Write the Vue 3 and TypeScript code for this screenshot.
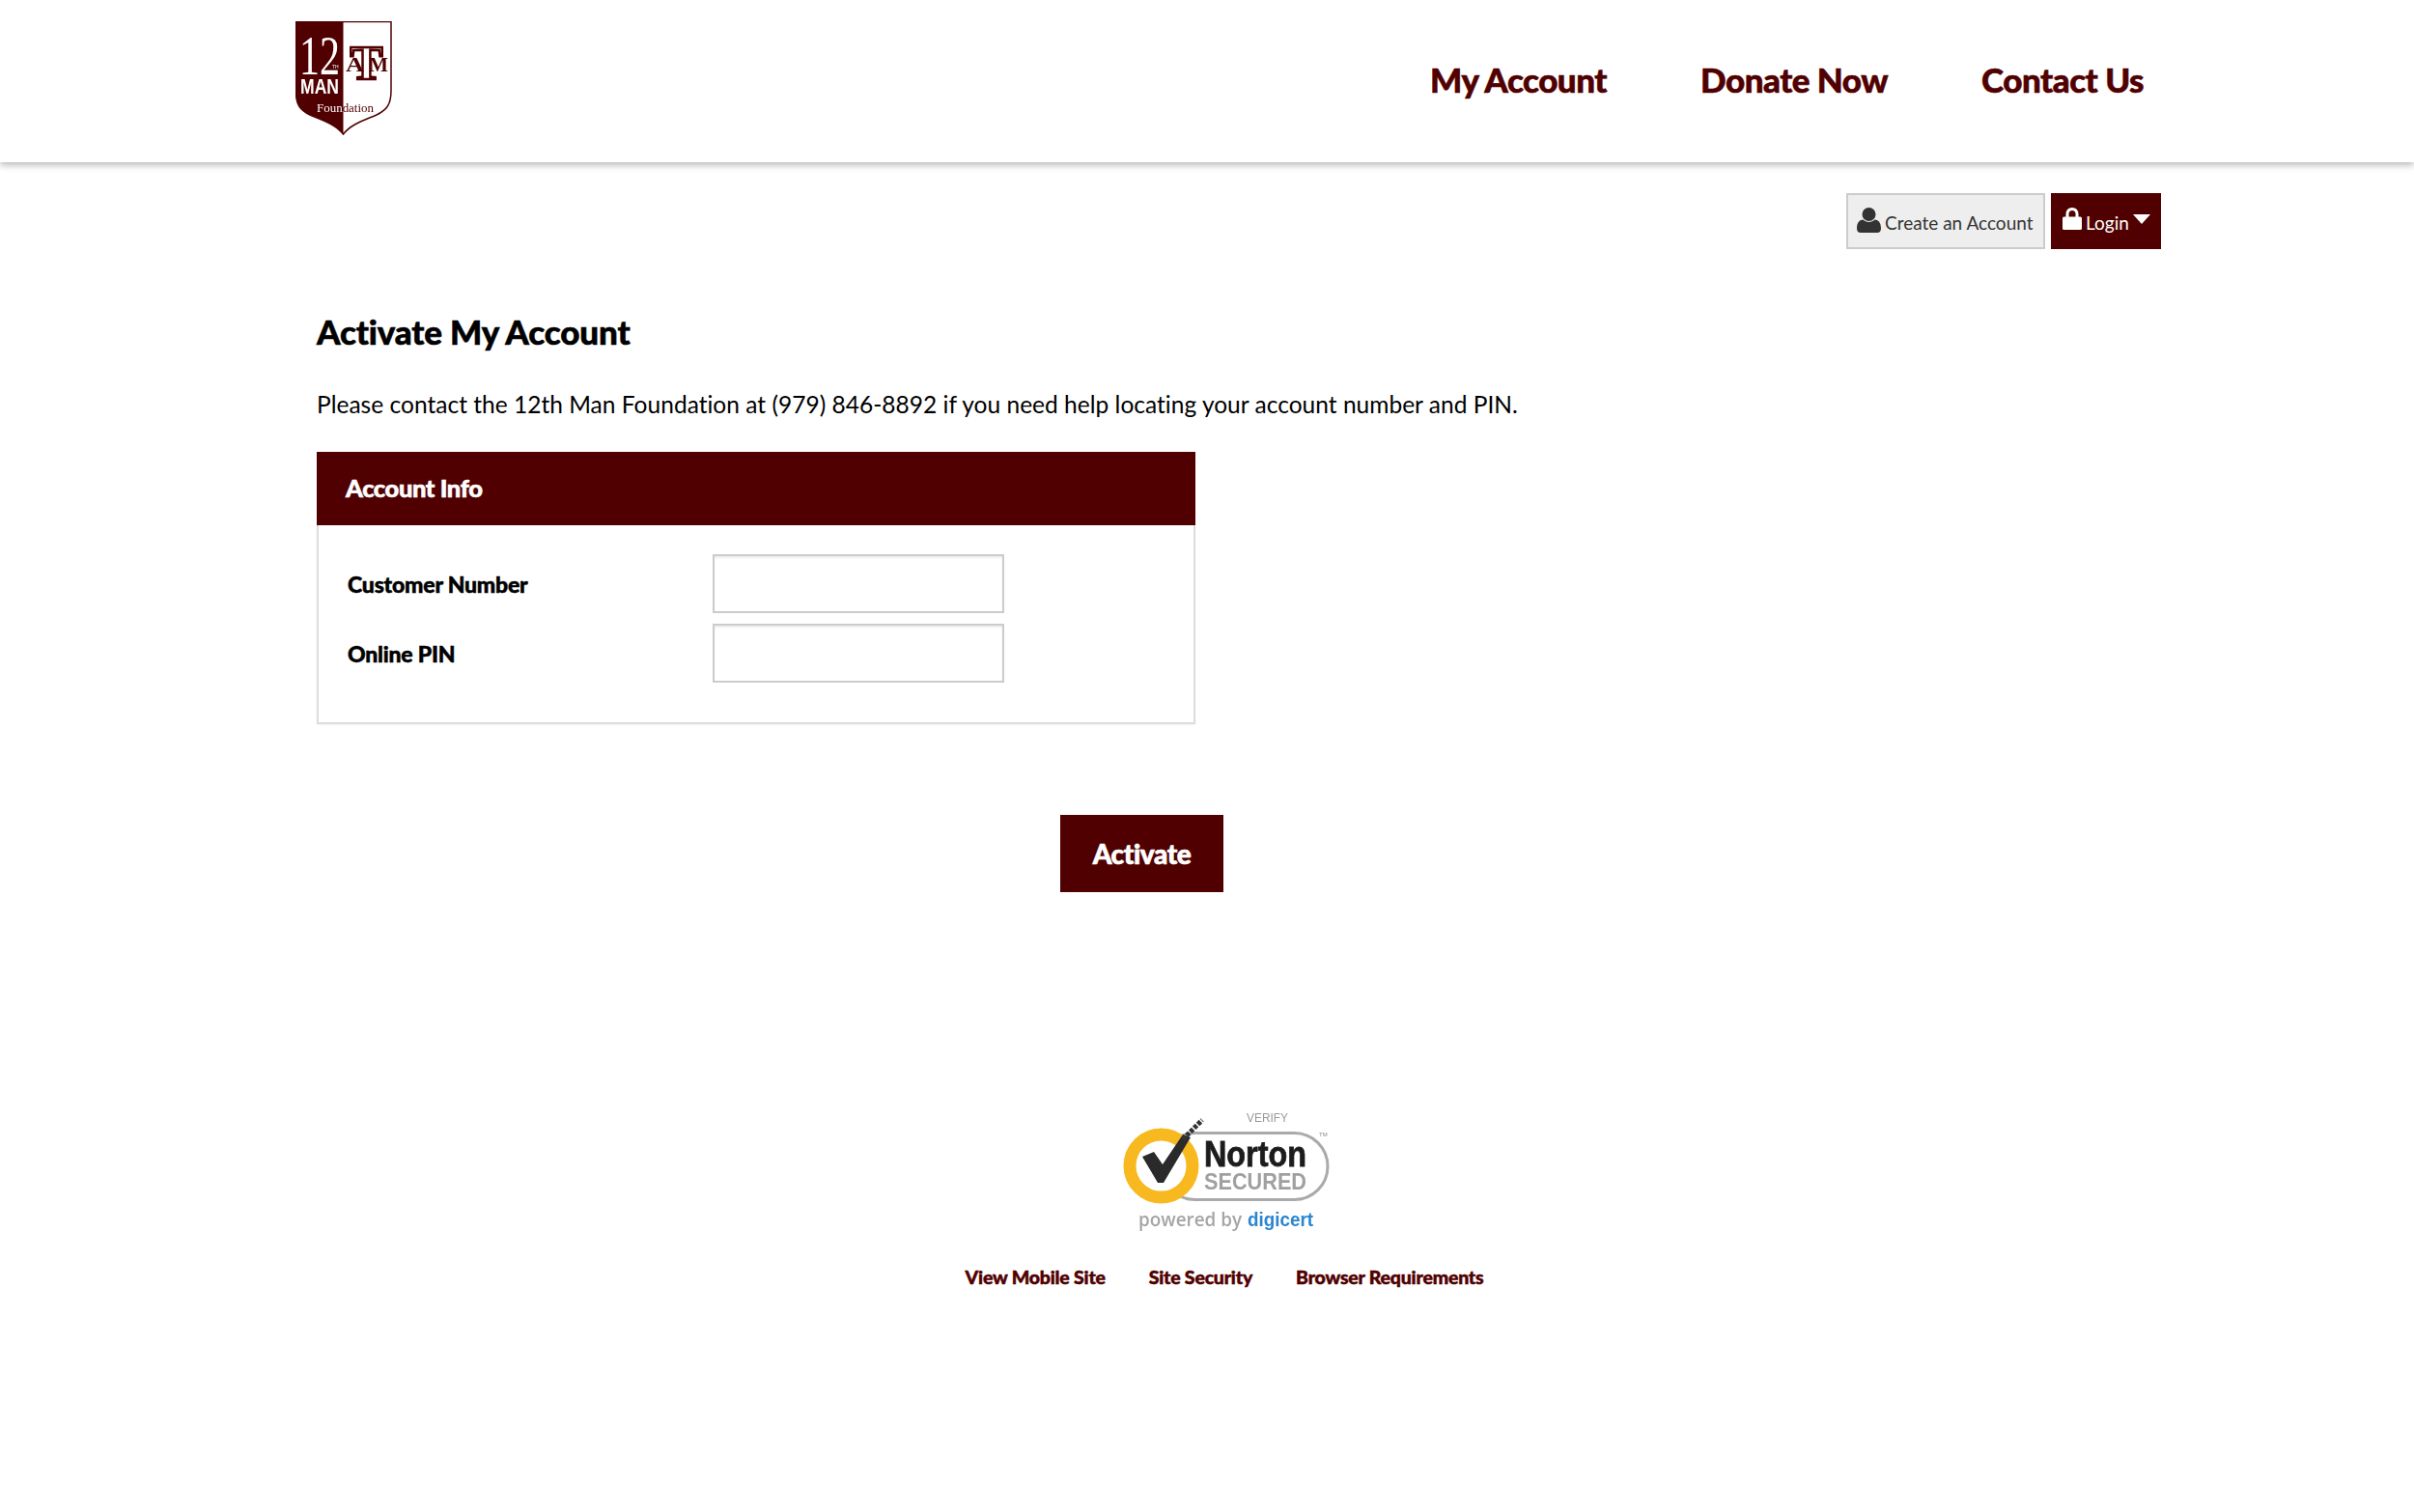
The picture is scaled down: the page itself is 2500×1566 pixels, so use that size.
<template>
  <div class="page">
    <header class="site-header">
      <a class="logo" href="#" aria-label="12th Man Foundation">
        <svg width="100" height="118" viewBox="0 0 100 118">
          <path class="shield-line" d="M.5.5H99V72C99 87 94 92 84 97 70 103 57 107 49.5 117 42 107 29 103 15 97 5 92 .5 87 .5 72Z" />
          <path class="shield-fill" d="M0 0H49.5V117.500C42 107 29 103 15 97 5 92 0 87 0 72Z" />
          <text class="serif" x="4" y="55" font-size="58" textLength="42" lengthAdjust="spacingAndGlyphs" fill="#fff">12</text>
          <text class="sans" x="38" y="49" font-size="5" fill="#fff">TH</text>
          <text class="sans-bold" x="5" y="75" font-size="22" textLength="40" lengthAdjust="spacingAndGlyphs" fill="#fff">MAN</text>
          <text class="serif" x="22" y="94" font-size="13.500" textLength="59" lengthAdjust="spacingAndGlyphs"><tspan fill="#fff">Foun</tspan><tspan fill="#500000">dation</tspan></text>
          <text class="serif-bold tm-t" x="56.500" y="60" font-size="50" textLength="34" lengthAdjust="spacingAndGlyphs">T</text>
          <text class="serif-bold" x="52" y="52" font-size="22" textLength="19" lengthAdjust="spacingAndGlyphs" fill="#500000">A</text>
          <text class="serif-bold" x="76" y="52" font-size="22" textLength="20" lengthAdjust="spacingAndGlyphs" fill="#500000">M</text>
        </svg>
      </a>
      <nav class="main-nav">
        <a v-for="item in navItems" :key="item" href="#">{{ item }}</a>
      </nav>
    </header>

    <div class="account-bar">
      <a class="btn-create" href="#">
        <svg width="25" height="26" viewBox="0 0 25 26">
          <circle cx="12.500" cy="7" r="7" fill="#333" />
          <path d="M0 21.500C0 15.500 3 12.500 6.500 12.500 8 14 10 15 12.500 15S17 14 18.500 12.500C22 12.500 25 15.500 25 21.500 25 24.500 23.500 26 21 26H4C1.500 26 0 24.500 0 21.500Z" fill="#333" />
        </svg>
        <span>Create an Account</span>
      </a>
      <button class="btn-login" type="button">
        <svg class="lock" width="20" height="23" viewBox="0 0 20 23">
          <path d="M3.500 10V6.500C3.500 2.800 6.300 0 10 0S16.500 2.800 16.500 6.500V10H13.500V6.500C13.500 4.500 12 3 10 3S6.500 4.500 6.500 6.500V10Z" fill="#fff" />
          <rect x="0" y="9.500" width="20" height="13.500" rx="1.500" fill="#fff" />
        </svg>
        <span>Login</span>
        <svg class="caret" width="18" height="10" viewBox="0 0 18 10">
          <path d="M0 0H18L9 10Z" fill="#fff" />
        </svg>
      </button>
    </div>

    <main class="content">
      <h1>Activate My Account</h1>
      <p class="help">Please contact the 12th Man Foundation at (979) 846-8892 if you need help locating your account number and PIN.</p>

      <section class="panel">
        <h2>Account Info</h2>
        <div class="panel-body">
          <div v-for="field in fields" :key="field" class="field-row">
            <label>{{ field }}</label>
            <input type="text" />
          </div>
        </div>
      </section>

      <div class="actions">
        <button class="btn-activate" type="button">Activate</button>
      </div>
    </main>

    <footer class="site-footer">
      <svg class="norton" width="230" height="130" viewBox="0 0 230 130">
        <g class="soft">
          <text class="sans" x="128" y="14" font-size="12" textLength="43" lengthAdjust="spacingAndGlyphs" fill="#999">VERIFY</text>
          <rect x="40" y="25.500" width="172" height="69" rx="34.500" fill="#fff" stroke="#aaa" stroke-width="3" />
          <circle cx="39.500" cy="59.500" r="32.500" fill="#fff" stroke="#f7b91f" stroke-width="13" />
          <path d="M20 50 32 45 41 58 62 27 70 30 42 77 36 77Z" fill="#2a2a2a" />
          <path d="M62 32 82 12" fill="none" stroke="#333" stroke-width="5" stroke-dasharray="4 1.500" />
          <text class="sans-bold heavy" x="84" y="60" font-size="36" textLength="106" lengthAdjust="spacingAndGlyphs" fill="#1c1c1c">Norton</text>
          <text class="sans-bold" x="84" y="84" font-size="23" textLength="106" lengthAdjust="spacingAndGlyphs" fill="#a0a0a0">SECURED</text>
          <text class="sans" x="203" y="29" font-size="6" fill="#888">TM</text>
          <text class="sans-semi" x="16" y="122" font-size="19" textLength="107" lengthAdjust="spacingAndGlyphs" fill="#a5a5a5">powered by</text>
          <text class="sans-bold" x="129" y="122" font-size="20" textLength="68" lengthAdjust="spacingAndGlyphs" fill="#2a86cf">digicert</text>
        </g>
      </svg>
      <nav class="footer-nav">
        <a v-for="item in footerItems" :key="item" href="#">{{ item }}</a>
      </nav>
    </footer>
  </div>
</template>

<script setup lang="ts">
const navItems: string[] = ['My Account', 'Donate Now', 'Contact Us']
const fields: string[] = ['Customer Number', 'Online PIN']
const footerItems: string[] = ['View Mobile Site', 'Site Security', 'Browser Requirements']
</script>

<style scoped>
.page {
  width: 2500px;
  height: 1566px;
  overflow: hidden;
  background: #fff;
  font-family: Lato, "Liberation Sans", sans-serif;
  color: #000;
}

a {
  text-decoration: none;
}

.site-header {
  display: flex;
  justify-content: space-between;
  height: 168px;
  padding: 22px 280px 0 306px;
  box-sizing: border-box;
  box-shadow: 0 3px 7px rgba(0, 0, 0, 0.28);
}

.logo {
  display: block;
  height: 118px;
  filter: blur(0.3px);
}

.serif {
  font-family: "Liberation Serif", serif;
}

.serif-bold {
  font-family: "Liberation Serif", serif;
  font-weight: 700;
}

.sans {
  font-family: "Liberation Sans", sans-serif;
}

.sans-semi {
  font-family: "Open Sans", sans-serif;
  font-weight: 600;
}

.sans-bold {
  font-family: "Liberation Sans", sans-serif;
  font-weight: 700;
}

.heavy {
  stroke: #1c1c1c;
  stroke-width: 0.8;
}

.shield-line {
  fill: #fff;
  stroke: #500000;
  stroke-width: 1.500;
}

.shield-fill {
  fill: #500000;
}

.tm-t {
  fill: #fff;
  stroke: #500000;
  stroke-width: 2.500;
}

.main-nav {
  display: flex;
  gap: 97px;
  padding-top: 38px;
}

.main-nav a {
  font-size: 35px;
  line-height: 44px;
  height: 44px;
  font-weight: 900;
  color: #500000;
  letter-spacing: -0.5px;
  -webkit-text-stroke: 0.6px #500000;
}

.account-bar {
  display: flex;
  justify-content: flex-end;
  gap: 6px;
  height: 58px;
  margin-top: 32px;
  padding-right: 262px;
}

.btn-create {
  display: flex;
  align-items: center;
  gap: 4px;
  width: 206px;
  box-sizing: border-box;
  padding-left: 9px;
  border: 2px solid #ccc;
  background: #eee;
  color: #333;
  font-size: 19px;
}

.btn-create svg {
  margin-top: -3px;
}

.btn-create span {
  padding-top: 2px;
}

.btn-login {
  display: flex;
  align-items: center;
  width: 114px;
  padding: 0 0 0 12px;
  border: 0;
  background: #500000;
  color: #fff;
  font-family: inherit;
  font-size: 19px;
}

.lock {
  margin-top: -5px;
}

.btn-login span {
  margin-left: 4px;
  padding-top: 2px;
}

.caret {
  margin-left: 4px;
  margin-top: -5px;
}

.content {
  padding-left: 328px;
}

h1 {
  margin: 0;
  padding-top: 63px;
  font-size: 35px;
  line-height: 44px;
  font-weight: 900;
  letter-spacing: -0.15px;
  -webkit-text-stroke: 0.6px #000;
}

.help {
  margin: 39px 0 0;
  font-size: 24.500px;
  line-height: 30px;
  letter-spacing: 0.02px;
}

.panel {
  width: 910px;
  margin-top: 34px;
}

h2 {
  margin: 0;
  height: 76px;
  padding-left: 30px;
  background: #500000;
  color: #fff;
  font-size: 25.500px;
  line-height: 74px;
  font-weight: 900;
  letter-spacing: -0.4px;
  -webkit-text-stroke: 0.6px #fff;
}

.panel-body {
  box-sizing: border-box;
  height: 206px;
  padding: 30px 0 0 30px;
  border: 2px solid #ddd;
  border-top: 0;
  box-shadow: 0 1px 2px rgba(0, 0, 0, 0.06);
}

.field-row {
  display: flex;
  align-items: center;
  height: 61px;
  margin-bottom: 11px;
}

.field-row label {
  width: 378px;
  font-size: 23px;
  font-weight: 900;
  letter-spacing: -0.2px;
  -webkit-text-stroke: 0.5px #000;
}

.field-row input {
  box-sizing: border-box;
  width: 302px;
  height: 61px;
  border: 2px solid #ccc;
  background: #fff;
  box-shadow: inset 0 2px 2px rgba(0, 0, 0, 0.07);
}

.actions {
  display: flex;
  padding: 94px 0 0 770px;
}

.btn-activate {
  width: 169px;
  height: 80px;
  border: 0;
  background: #500000;
  color: #fff;
  font-family: inherit;
  font-size: 28px;
  font-weight: 900;
  letter-spacing: -0.4px;
  -webkit-text-stroke: 0.7px #fff;
}

.site-footer {
  display: flex;
  flex-direction: column;
  align-items: center;
  padding: 224px 0 0 36px;
}

.norton {
  display: block;
  margin-left: 20px;
}

.soft {
  filter: blur(0.7px);
}

.footer-nav {
  display: flex;
  gap: 45px;
  margin-top: 33px;
}

.footer-nav a {
  font-size: 19.500px;
  line-height: 24px;
  font-weight: 900;
  color: #500000;
  letter-spacing: -0.2px;
  -webkit-text-stroke: 0.5px #500000;
}
</style>
